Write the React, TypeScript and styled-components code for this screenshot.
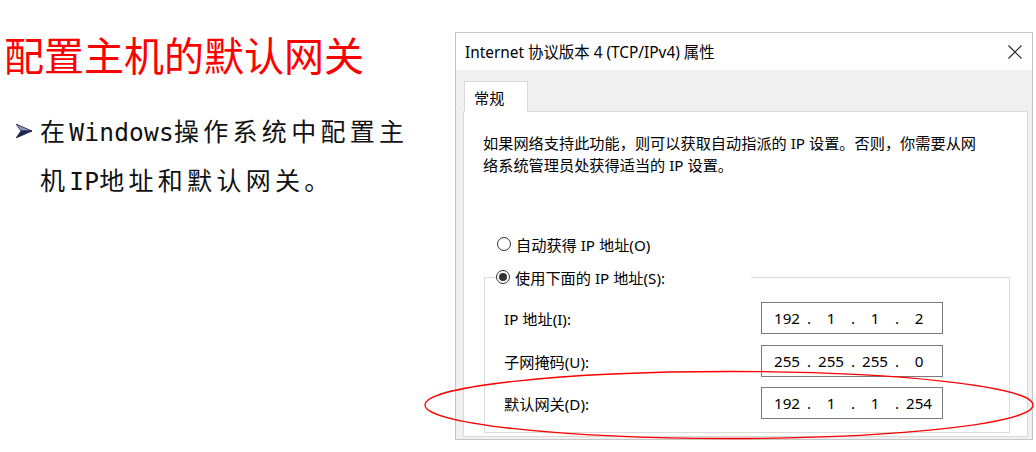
import React from "react";
import styled, { createGlobalStyle } from "styled-components";

const Global = createGlobalStyle`
  html, body { margin: 0; padding: 0; background: #ffffff; }
  body { width: 1036px; height: 452px; overflow: hidden; }
`;

const Page = styled.div`
  position: relative;
  width: 1036px;
  height: 452px;
  display: flex;
  align-items: flex-start;
  font-family: "Noto Sans CJK SC", sans-serif;
`;

const LeftCol = styled.div`
  width: 455px;
  flex: none;
  display: flex;
  flex-direction: column;
`;

const Title = styled.h1`
  margin: 30px 0 0 4px;
  font-family: "Noto Sans CJK SC", sans-serif;
  font-weight: 400;
  font-size: 40px;
  line-height: 48px;
  color: #ff0000;
  white-space: nowrap;
`;

const Bullet = styled.div`
  margin-top: 29px;
  display: flex;
  align-items: flex-start;
  padding-left: 16px;
`;

const BulletMark = styled.div`
  width: 24px;
  height: 47px;
  flex: none;
  display: flex;
  align-items: center;
`;

const BulletText = styled.p`
  margin: 0;
  font-family: "Noto Sans CJK SC", sans-serif;
  font-weight: 400;
  font-size: 25px;
  line-height: 47px;
  letter-spacing: 4.3px;
  color: #111;
  white-space: nowrap;
`;

const Latin = styled.span`
  font-family: "DejaVu Sans Mono", monospace;
  font-size: 24.5px;
  letter-spacing: 0.2px;
`;

const Dialog = styled.div`
  margin-top: 32px;
  width: 578px;
  height: 408px;
  box-sizing: border-box;
  border: 1px solid #c6c6c6;
  background: #ffffff;
  display: flex;
  flex-direction: column;
  font-family: "Noto Sans", "Noto Sans CJK SC", sans-serif;
  font-size: 15.2px;
  color: #000;
`;

const TitleBar = styled.div`
  height: 37px;
  flex: none;
  display: flex;
  align-items: center;
  justify-content: space-between;
  padding: 0 4px 0 9px;
  background: #ffffff;
`;

const TitleText = styled.span`
  font-size: 15.4px;
  white-space: nowrap;
`;

const CloseBtn = styled.div`
  width: 24px;
  height: 24px;
  display: flex;
  align-items: center;
  justify-content: center;
  margin-right: 1px;
`;

const Body = styled.div`
  flex: 1;
  display: flex;
  flex-direction: column;
  background: #f0f0f0;
  padding: 11px 4px 2px 7px;
`;

const Tab = styled.div`
  position: relative;
  z-index: 1;
  margin-left: 1px;
  margin-bottom: -1px;
  width: 64px;
  height: 31px;
  box-sizing: border-box;
  border: 1px solid #d9d9d9;
  border-bottom: none;
  background: #ffffff;
  padding-left: 9px;
  display: flex;
  align-items: center;
`;

const Panel = styled.div`
  flex: 1;
  border: 1px solid #d9d9d9;
  background: #ffffff;
  padding: 20px 0 0 19px;
  display: flex;
  flex-direction: column;
`;

const Desc = styled.p`
  margin: 0;
  line-height: 22px;
  white-space: nowrap;
`;

const RadioRow = styled.label`
  margin-top: 57px;
  padding-left: 14px;
  height: 22px;
  display: flex;
  align-items: center;
  gap: 5px;
  white-space: nowrap;
`;

const RadioCircle = styled.span<{ $checked?: boolean }>`
  width: 14px;
  height: 14px;
  box-sizing: border-box;
  border-radius: 50%;
  border: 1px solid #333333;
  background: #ffffff;
  display: flex;
  align-items: center;
  justify-content: center;
  flex: none;
  &::after {
    content: "";
    display: ${(p) => (p.$checked ? "block" : "none")};
    width: 8px;
    height: 8px;
    border-radius: 50%;
    background: #333333;
  }
`;

const Group = styled.fieldset`
  margin: 11px 0 0 1px;
  width: 526px;
  box-sizing: border-box;
  border: 1px solid #dcdcdc;
  padding: 14px 0 13px 19px;
  min-inline-size: 0;
`;

const Legend = styled.legend`
  margin-left: -8px;
  padding: 0;
  width: 255px;
  height: 22px;
  display: flex;
  align-items: center;
  gap: 5px;
  white-space: nowrap;
`;

const Fields = styled.div`
  display: grid;
  grid-template-columns: 257px 182px;
  row-gap: 10.5px;
  align-items: center;
`;

const FieldLabel = styled.span`
  white-space: nowrap;
`;

const IpBox = styled.div`
  height: 32px;
  box-sizing: border-box;
  border: 1px solid #7a7a7a;
  background: #ffffff;
  display: flex;
  align-items: center;
  padding-left: 6px;
`;

const Octet = styled.span`
  width: 38px;
  text-align: center;
`;

const Dot = styled.span`
  width: 6px;
  text-align: center;
`;

const Overlay = styled.svg`
  position: absolute;
  left: 0;
  top: 0;
  pointer-events: none;
`;

function IpField({ value }: { value: string[] }) {
  return (
    <IpBox>
      {value.map((v, i) => (
        <React.Fragment key={i}>
          <Octet>{v}</Octet>
          {i < 3 && <Dot>.</Dot>}
        </React.Fragment>
      ))}
    </IpBox>
  );
}

export default function App() {
  return (
    <>
      <Global />
      <Page>
        <LeftCol>
          <Title>配置主机的默认网关</Title>
          <Bullet>
            <BulletMark>
              <svg width="16" height="14" viewBox="0 0 16 14">
                <polygon points="0,0 16,7 5,7" fill="#8d95b8" stroke="#1c2450" strokeWidth="0.8" />
                <polygon points="5,7 16,7 0,14" fill="#1c2450" stroke="#1c2450" strokeWidth="0.8" />
              </svg>
            </BulletMark>
            <BulletText>
              在<Latin>Windows</Latin>操作系统中配置主
              <br />
              机<Latin>IP</Latin>地址和默认网关。
            </BulletText>
          </Bullet>
        </LeftCol>
        <Dialog>
          <TitleBar>
            <TitleText>Internet 协议版本 4 (TCP/IPv4) 属性</TitleText>
            <CloseBtn>
              <svg width="14" height="14" viewBox="0 0 14 14">
                <path d="M0.5 0.5 L13.5 13.5 M13.5 0.5 L0.5 13.5" stroke="#222" strokeWidth="1.1" />
              </svg>
            </CloseBtn>
          </TitleBar>
          <Body>
            <Tab>常规</Tab>
            <Panel>
              <Desc>
                如果网络支持此功能，则可以获取自动指派的 IP 设置。否则，你需要从网
                <br />
                络系统管理员处获得适当的 IP 设置。
              </Desc>
              <RadioRow>
                <RadioCircle />
                自动获得 IP 地址(O)
              </RadioRow>
              <Group>
                <Legend>
                  <RadioCircle $checked />
                  使用下面的 IP 地址(S):
                </Legend>
                <Fields>
                  <FieldLabel>IP 地址(I):</FieldLabel>
                  <IpField value={["192", "1", "1", "2"]} />
                  <FieldLabel>子网掩码(U):</FieldLabel>
                  <IpField value={["255", "255", "255", "0"]} />
                  <FieldLabel>默认网关(D):</FieldLabel>
                  <IpField value={["192", "1", "1", "254"]} />
                </Fields>
              </Group>
            </Panel>
          </Body>
        </Dialog>
        <Overlay width="1036" height="452" viewBox="0 0 1036 452">
          <ellipse cx="729" cy="405" rx="304" ry="33.5" fill="none" stroke="#ff0000" strokeWidth="1.3" />
        </Overlay>
      </Page>
    </>
  );
}
